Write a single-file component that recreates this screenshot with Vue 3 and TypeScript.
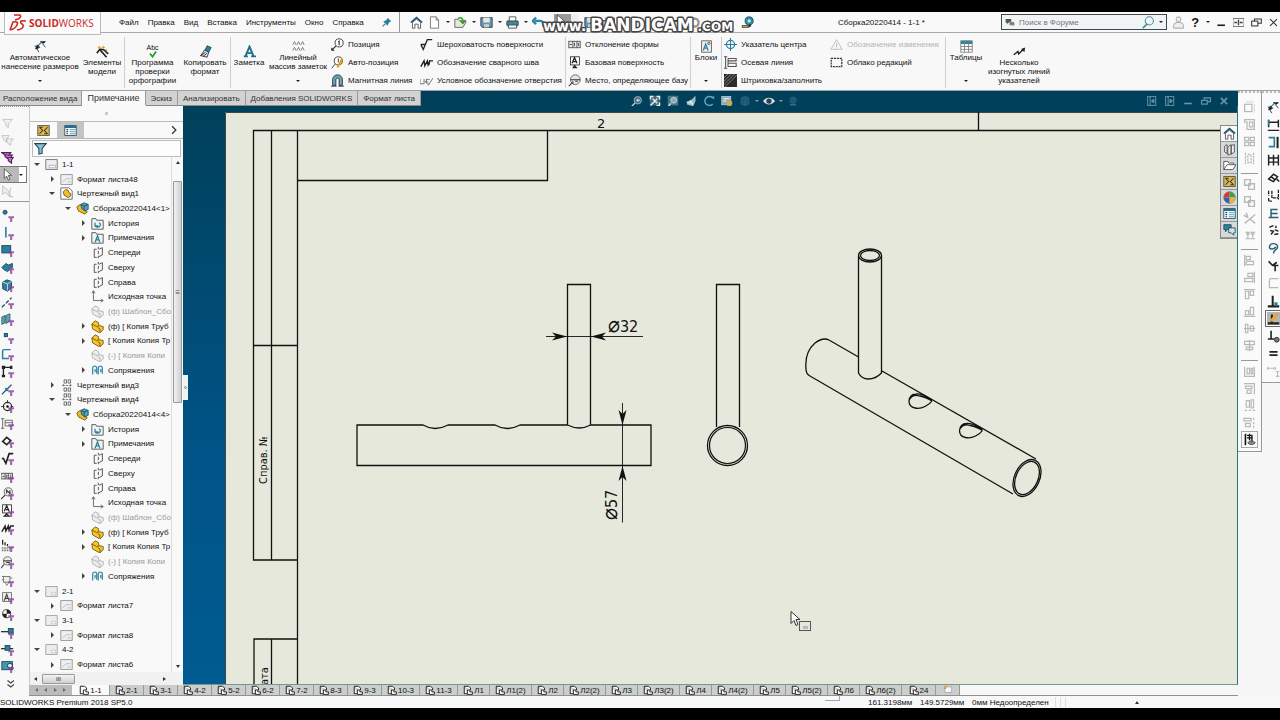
<script setup lang="ts">
import { ref } from 'vue'

interface TreeRow {
  level: number
  icon: string
  text: string
  arrow?: 'open' | 'closed'
  muted?: boolean
}
interface SheetTab {
  text: string
  size: 's' | 'm' | 'l' | 'xl'
}

const K = '#222'
const B = '#2a7f9e'
const P = '#8a3fa0'
const G = '#b9b9b9'
const filterMark = `<path d="M9 9h7v2.500h-2.200V16h-2.600v-4.500H9z" fill="${P}" opacity=".8"/>`
const gold = '<path d="M1 5l4-4 4 2 1 4 5 1v4l-4 4-9-5z" fill="#f6c62c" stroke="#6b4d08"/><path d="M8 9l3 2v4M1 5l6 3 3-1" fill="none" stroke="#6b4d08"/>'
const greyPart = '<path d="M1 5l4-4 4 2 1 4 5 1v4l-4 4-9-5z" fill="#ececec" stroke="#aaa"/><path d="M8 9l3 2v4M1 5l6 3 3-1" fill="none" stroke="#aaa"/>'

const icons: Record<string, string> = {
  smartDim: `<path d="M3 9L9 3M1 7l4 4" stroke="${B}" stroke-width="1.5"/><path d="M2 11l2-5 3 3zM8 2l6 0-2 2zM10 4l4 5" fill="${K}" stroke="${K}"/><path d="M3 10l3 5" stroke="${K}"/>`,
  modelItems: `<path d="M1 10l4-5 5 1 5 5" fill="none" stroke="${K}" stroke-width="2"/><path d="M5 6l8 9" stroke="${K}" stroke-width="2"/><circle cx="4" cy="3" r="1.6" fill="#f0a020"/><path d="M9 1v4M7 3h4M13 5v3" stroke="#d89018"/>`,
  spell: '<path d="M1 6l6 7L15 1" fill="none" stroke="#2f9e2f" stroke-width="4"/>',
  painter: `<path d="M10 1l5 2-3 6-5-2z" fill="${B}" stroke="#15465a"/><path d="M7 6l5 3-2 6-8-2z" fill="#d9e3e6" stroke="${K}"/><path d="M2 13l6-4M5 14l5-4" stroke="${K}"/>`,
  noteA: '<path d="M1 14h5M10 14h6M3 14L8 2l5 12M5 10h6" fill="none" stroke="#20708c" stroke-width="2.4"/>',
  pattern: '<path d="M1 6l2-4 2 4M6 6l2-4 2 4M11 6l2-4 2 4M1 13l2-4 2 4M6 13l2-4 2 4M11 13l2-4 2 4" fill="none" stroke="#666"/>',
  balloon: `<circle cx="10" cy="6" r="5" fill="#fff" stroke="${K}"/><path d="M9 5l1-1v5M6 10l-5 5M1 12v3h3" fill="none" stroke="${K}" stroke-width="1.3"/>`,
  autoBalloon: `<circle cx="9" cy="6" r="5" fill="#fff" stroke="${K}"/><path d="M9 3v5M5 10l-4 5" stroke="${K}"/><path d="M14 3l-6 11" stroke="#e79a1c" stroke-width="2.5"/>`,
  magnet: `<path d="M2 14V7a6 6 0 0112 0v7h-4V7a2 2 0 00-4 0v7z" fill="#62a9bf" stroke="${K}"/><path d="M0 15h7M9 15h7" stroke="${K}"/>`,
  rough: `<path d="M1 8h6M1 8l3 6 5-12h6" fill="none" stroke="${K}" stroke-width="1.6"/>`,
  weld: `<path d="M1 13L5 6l1 6 3-6 1 5 2-5h4M12 5l-1 6" fill="none" stroke="${K}" stroke-width="1.7"/>`,
  hole: '<path d="M0 6v6h5V6M8 6v5M6 9l2 2 2-2M12 7a3 3 0 100 5M10 14l6-9" fill="none" stroke="#777" stroke-width="1.2"/>',
  geomTol: '<rect x="1" y="4" width="14" height="8" fill="#e8e8e8" stroke="#444"/><path d="M6 4v8M11 4v8M2 8h3M8 6v4M13 6v4" stroke="#444"/>',
  datum: `<rect x="3" y="1" width="11" height="10" fill="#fff" stroke="${K}"/><path d="M5 9l3-7 3 7M6 7h5M8 11v2" fill="none" stroke="${K}" stroke-width="1.6"/><path d="M5 15l3-4 4 4z" fill="${K}"/>`,
  datumTarget: '<circle cx="9" cy="7" r="6" fill="#e6e6e6" stroke="#555"/><path d="M3 7h12M6 9v3M9 9h3M5 11l-4 4" fill="none" stroke="#333" stroke-width="1.3"/>',
  block: `<rect x="2" y="1" width="12" height="14" fill="#eee" stroke="#555"/><path d="M4 13l3-8 3 8M5 10h4" fill="none" stroke="${B}" stroke-width="1.5"/><circle cx="11" cy="4" r="1.5" fill="none" stroke="#444"/>`,
  centerMark: `<circle cx="8" cy="8" r="5" fill="none" stroke="${B}" stroke-width="1.5"/><path d="M8 0v16M0 8h16" stroke="${B}" stroke-width="1.3"/>`,
  centerLine: '<path d="M2 1v14M5 3v10h10V9H5V6h10V3H5M0 1h4M0 15h4" fill="none" stroke="#555" stroke-width="1.3"/>',
  hatch: '<rect width="16" height="16" fill="#2b2b2b"/><path d="M0 5l5-5M0 9l9-9M0 13l13-13M1 16L16 1" stroke="#aaa" stroke-width=".8"/>',
  revSymbol: `<path d="M8 2l7 12H1z" fill="#f3f3f3" stroke="${G}"/><path d="M8 6v5M8 12v1" stroke="${G}"/>`,
  revCloud: '<rect x="1.500" y="3" width="13" height="10" fill="none" stroke="#333" stroke-width="1.500" stroke-dasharray="2.500 1"/>',
  table: '<rect x="1" y="1" width="14" height="14" fill="#fff" stroke="#777"/><rect x="1" y="1" width="14" height="4" fill="#31859f"/><path d="M1 8h14M1 11.500h14M5.500 1v14M10.500 1v14" stroke="#777"/>',
  multi: `<path d="M1 12l5-4 1 3 6-6" fill="none" stroke="${K}" stroke-width="1.8"/><path d="M15 3l-1 6-4-4z" fill="${K}"/>`,
  pin: `<path d="M9 1l6 6-3 1-2 3-1 3-7-7 3-1 3-2z" fill="${B}"/><path d="M5 11l-4 4" stroke="${B}" stroke-width="2"/>`,
  home: '<path d="M1 8l7-6 7 6" fill="none" stroke="#17556d" stroke-width="2"/><path d="M3 8v7h3v-5h4v5h3V8L8 4z" fill="#fff" stroke="#444"/>',
  newDoc: '<path d="M3 1h7l3 4v10H3z" fill="#fff" stroke="#666"/><path d="M10 1v4h3" fill="none" stroke="#666"/>',
  open: '<path d="M1 14V4h4l2 2h6l2 1-4 7z" fill="#e8e8d8" stroke="#555"/><path d="M5 3c4-2 6 0 6 4M8 6l3 3 3-4" fill="none" stroke="#2fa02f" stroke-width="2"/>',
  save: '<path d="M1 2h14v12H3l-2-2z" fill="#5f97b3" stroke="#333"/><rect x="4" y="2" width="8" height="6" fill="#dfe7ea"/><rect x="5" y="10" width="6" height="4" fill="#ccc"/>',
  print: '<path d="M4 6V1h8v5" fill="#fff" stroke="#444"/><rect x="1" y="6" width="14" height="6" rx="1" fill="#3b87a6" stroke="#333"/><path d="M3 11h10v4H3z" fill="#eee" stroke="#444"/>',
  undo: '<path d="M4 6h6a4 4 0 014 4v3M5 2L1 6l4 4" fill="none" stroke="#2b86a8" stroke-width="3"/>',
  arrowCursor: '<path d="M4 1v12l3-3 2 5 2-1-2-5h4z" fill="#fff" stroke="#444"/>',
  tape: '<circle cx="10" cy="6" r="5" fill="#2d89ae" stroke="#174c62"/><circle cx="10" cy="6" r="2" fill="#d6e6c8"/><path d="M1 13h8l3-2" fill="none" stroke="#333" stroke-width="3"/><path d="M2 13h7" stroke="#e8c030"/>',
  redo: '<path d="M12 6H7a4 4 0 00-4 5M10 2l4 4-4 4" fill="none" stroke="#222" stroke-width="2"/>',
  gear: '<circle cx="8" cy="8" r="5" fill="none" stroke="#999" stroke-width="3"/>',
  user: '<circle cx="8" cy="4" r="3" fill="#eee" stroke="#999"/><path d="M2 15v-3a4 4 0 014-4h4a4 4 0 014 4v3z" fill="#eee" stroke="#999"/>',
  bubbles: '<path d="M1 3h9v6H5l-2 3V9H1z" fill="#555"/><path d="M7 8h8v5h-1v2l-2-2H7z" fill="#777" stroke="#eee" stroke-width=".5"/>',
  magnifier: '<circle cx="9" cy="6" r="5" fill="#f2f8fa" stroke="#4d88a4" stroke-width="1.300"/><path d="M6 10l-5 5" stroke="#4d88a4" stroke-width="2"/>',
  minimize: `<path d="M2 12h11" stroke="${K}" stroke-width="2.400"/>`,
  split: `<rect x="0" y="2" width="16" height="12" fill="none" stroke="#444"/><path d="M8 4v8M2 8h4M10 8h4" stroke="#444" stroke-width="2"/>`,
  restore: '<rect x="1" y="6" width="9" height="7" fill="none" stroke="#333" stroke-width="1.500"/><path d="M5 6V3h10v6h-5" fill="none" stroke="#333" stroke-width="1.500"/>',
  close: '<path d="M3 3l10 10M13 3L3 13" stroke="#333" stroke-width="1.600"/>',
  zoomFit: '<circle cx="9" cy="7" r="5" fill="#4c7183" stroke="#a8c4d0"/><path d="M7 7h5M9 5v4M5 11l-4 4" stroke="#d4e2e8" stroke-width="1.500"/>',
  zoomArea: '<rect x="1" y="1" width="14" height="13" fill="#43697c"/><path d="M2 6V2h4M10 2h4v4M14 10v4h-4M2 14l5-5M5 5l6 6M11 5L5 11" stroke="#e3edf0" stroke-width="2" fill="none"/>',
  zoomSheet: '<rect x="1" y="1" width="14" height="13" fill="#5d8191" opacity=".8"/><circle cx="9" cy="7" r="4" fill="#8facb8" stroke="#c7d8df"/><path d="M5 11l-3 4" stroke="#c7d8df" stroke-width="2"/>',
  section: '<path d="M2 9l7-3 5-5v7l-3 7-8-2z" fill="#9fbac6"/><path d="M3 10l8 1M7 7l3 6" stroke="#e8f0f3" stroke-width="1.500"/>',
  rotate: '<path d="M13 4a6 6 0 100 8" fill="none" stroke="#5fa9c8" stroke-width="2"/><path d="M10 2h5v4z" fill="#5fa9c8"/>',
  display: '<rect x="1" y="2" width="12" height="11" fill="#8ba9b6" stroke="#c4d6dd"/><path d="M3 5h8M3 8h4" stroke="#fff" stroke-width="1.500"/><circle cx="11" cy="11" r="4" fill="#c9ac5a"/>',
  cubeDim: '<path d="M3 4l5-2 5 2v8l-5 2-5-2zM8 6v8" fill="#1c5873" stroke="#2f6d88"/>',
  eye: '<path d="M0 8c4-6 12-6 16 0-4 6-12 6-16 0z" fill="#d6e2e8"/><circle cx="8" cy="8" r="3.500" fill="#2a4350"/>',
  ball: '<circle cx="8" cy="7" r="5" fill="#1f5873"/><path d="M4 13h8" stroke="#2f6d88" stroke-width="2"/>',
  paneL: '<rect x="1" y="1" width="13" height="14" fill="none" stroke="#6b97aa" stroke-width="1.500"/><path d="M5 1v14M11 5l-4 3 4 3z" stroke="#6b97aa" stroke-width="1.500" fill="#6b97aa"/>',
  paneR: '<rect x="1" y="1" width="13" height="14" fill="none" stroke="#6b97aa" stroke-width="1.500"/><path d="M5 1v14M8 5l4 3-4 3z" stroke="#6b97aa" stroke-width="1.500" fill="#6b97aa"/>',
  minDim: '<path d="M2 12h12" stroke="#6b97aa" stroke-width="2.500"/>',
  restDim: '<rect x="1" y="7" width="9" height="6" fill="none" stroke="#6b97aa" stroke-width="1.800"/><path d="M5 6V3h10v6h-5" fill="none" stroke="#6b97aa" stroke-width="1.800"/>',
  closeDim: '<path d="M3 3l10 10M13 3L3 13" stroke="#6b97aa" stroke-width="2.500"/>',
  // tree
  funnel: '<path d="M1 2h14l-5 6v6l-4 1V8z" fill="#8fc0cf" stroke="#1d4858" stroke-width="1.300"/>',
  sheetTab: '<rect x="1" y="2" width="14" height="12" fill="#e0b64a" stroke="#444"/><path d="M3 4l4 4-4 4M13 4L9 8l4 4M3 4h4M9 12h4" fill="none" stroke="#333" stroke-width="1.300"/>',
  listTab: '<rect x="1" y="2" width="14" height="12" fill="#fff" stroke="#17455a"/><rect x="1" y="2" width="14" height="3" fill="#2a6f8c"/><path d="M3 7h2M3 9.500h2M3 12h2" stroke="#17455a" stroke-width="1.500"/><path d="M7 7h7M7 9.500h7M7 12h7" stroke="#3a8aa8" stroke-width="1"/>',
  sheet: '<rect x="1" y="2" width="14" height="12" fill="#ededed" stroke="#9a9a9a"/><path d="M8 12h5V9H8z" fill="#fff" stroke="#c2c2c2"/>',
  sheetActive: '<rect x="1" y="2" width="14" height="12" fill="#eee" stroke="#666"/><path d="M5 12h8V9H5z" fill="#fff" stroke="#aaa"/>',
  format: '<rect x="1" y="2" width="14" height="12" fill="#efefef" stroke="#8a8a8a"/><path d="M3 11l5-4h5M9 11h4" fill="none" stroke="#b5b5b5"/>',
  view: '<path d="M1 1h10l4 4v10H1z" fill="#fff" stroke="#555"/><path d="M4 6l3-3 3 1 1 3 2 1v3l-3 2-5-3z" fill="#f0bd2c" stroke="#6b4d08"/>',
  viewPlain: '<path d="M5 1h3v4H5zM10 1h3v4h-3zM5 11h3v4H5zM10 11h3v4h-3z" fill="none" stroke="#555"/><path d="M3 8h11M4 6v4M13 6v4" stroke="#666" stroke-dasharray="3 1"/>',
  assembly: '<path d="M1 6l4-3 4 2 1 5 4 2-3 3-8-4z" fill="#f1bc25" stroke="#6b4d08"/><path d="M6 3l4-2 5 2v6l-4 2-4-3z" fill="#4fa1bf" stroke="#184a5e"/><path d="M10 5v5M6 3l4 2 5-2" fill="none" stroke="#184a5e"/>',
  history: '<path d="M1 2h5l1 2h8v11H1z" fill="#eef3f4" stroke="#444"/><path d="M5 11a3.500 3 0 105-4M5 7v4h4" fill="none" stroke="#2f7c98" stroke-width="1.500"/>',
  notes: '<path d="M1 2h5l1 2h8v11H1z" fill="#eef3f4" stroke="#444"/><path d="M5 14l3-8 3 8M6 11h4" fill="none" stroke="#2f7c98" stroke-width="1.600"/>',
  plane: '<path d="M4 4h3M4 4v10h3M9 1v3M9 6v4M9 12v3M10 4l4-2v9l-4 2" fill="none" stroke="#555" stroke-width="1.200"/>',
  origin: '<path d="M3 1v12h12M1 4l2-3 2 3M12 11l3 2-3 2" fill="none" stroke="#555"/>',
  part: gold,
  partDim: greyPart,
  mates: '<path d="M2 13V5a2.500 2.500 0 015 0v7M5 10V6M9 13V5a2.500 2.500 0 015 0v7M12 10V6" fill="none" stroke="#3e8da8" stroke-width="1.600"/>',
  // selection filters
  f0: '<path d="M2 3h12l-5 5v5l-3-2V8z" fill="#f2f2f2" stroke="#bbb"/>',
  f1: '<path d="M1 2h9l-3 4v4L4 8zM6 6h9l-3 4v4l-3-2z" fill="#f2f2f2" stroke="#bbb"/>',
  f2: '<path d="M1 2h11l-2 3h4l-2 3h3l-2 3v4l-4-3v-2L5 7V5z" fill="#c377d2" stroke="#54205f" stroke-width="1.400"/><path d="M4 5h6M7 8h5" stroke="#54205f"/>',
  f4: '<path d="M2 1v11l3-3 7 6-3-8z" fill="#eee" stroke="#bbb"/><path d="M12 3l-2 10 5 2" stroke="#bbb" fill="none"/>',
  g0: `<circle cx="5" cy="4" r="2.500" fill="${B}" stroke="#163f4f"/>${filterMark}`,
  g1: `<path d="M6 0v13" stroke="${B}" stroke-width="2"/>${filterMark}`,
  g2: `<rect x="1" y="2" width="11" height="9" fill="${B}" stroke="#163f4f"/>${filterMark}`,
  g3: `<path d="M1 8l5-5 3 2 5-2v5l-6 5-4-2z" fill="${B}" stroke="#163f4f"/>${filterMark}`,
  g4: `<path d="M2 4l5-3 6 2v8l-5 4-6-3z" fill="${B}" stroke="#163f4f"/><path d="M2 4l6 2 5-3M8 6v8" fill="none" stroke="#d4edf4"/>${filterMark}`,
  g5: `<path d="M1 14L13 2" stroke="#174c62" stroke-width="1.600" stroke-dasharray="5 2"/>${filterMark}`,
  g6: `<path d="M1 5l4-2v9l-4 2zM6 3l5-2v9l-5 3z" fill="#5fa6b8" stroke="#2b5866"/>${filterMark}`,
  g7: `<rect x="4" y="3" width="4" height="4" fill="${B}" stroke="#163f4f"/>${filterMark}`,
  g8: `<path d="M12 2H4Q2 2 2 4v9h8" fill="none" stroke="${B}" stroke-width="1.800"/>${filterMark}`,
  g9: `<path d="M3 13V3h10" fill="none" stroke="${K}" stroke-width="1.600"/><path d="M1 1h4v4H1zM11 1h3v4h-3zM1 12h4v3H1z" fill="${K}"/>${filterMark}`,
  g10: `<path d="M1 14L13 2" stroke="#174c62" stroke-width="1.600"/><rect x="5" y="6" width="4" height="4" fill="${B}"/>${filterMark}`,
  g11: `<circle cx="8" cy="8" r="5" fill="none" stroke="${K}" stroke-width="1.500"/><circle cx="8" cy="8" r="1.500"/><path d="M8 0v4M0 8h4M12 8h3" stroke="${K}"/>${filterMark}`,
  g12: `<path d="M2 2v12M5 4h9v7H5zM0 2h4M0 14h4M5 7h9" fill="none" stroke="#555"/>${filterMark}`,
  g13: `<path d="M2 8l5-5 5 4-5 5z" fill="none" stroke="${K}" stroke-width="2"/>${filterMark}`,
  g14: `<path d="M1 8h2l3 6 4-12h5" fill="none" stroke="${K}" stroke-width="2"/>${filterMark}`,
  g15: `<rect x="0" y="4" width="14" height="7" fill="#ddd" stroke="#444"/><path d="M5 4v7M9 4v7M2 8h2M7 6v4M12 6v4" stroke="#444"/>${filterMark}`,
  g16: `<circle cx="9" cy="6" r="5" fill="#eee" stroke="#555"/><path d="M7 8V4l4 4V4M5 10l-5 5" fill="none" stroke="${K}" stroke-width="1.300"/>${filterMark}`,
  g17: `<rect x="2" y="1" width="11" height="10" fill="#fff" stroke="${K}"/><path d="M4 9l3-7 3 7M6 7h4M7 11v2M4 15l3-3 3 3z" fill="none" stroke="${K}" stroke-width="1.500"/>${filterMark}`,
  g18: `<path d="M1 12L5 5l1 6 3-6 1 5 2-5h4" fill="none" stroke="${K}" stroke-width="1.800"/>${filterMark}`,
  g19: `<path d="M2 1v6M5 4v4M8 6v3" stroke="${K}" stroke-width="1.500"/><path d="M1 11h13M1 14h10" stroke="#777" stroke-dasharray="2 1" stroke-width="2"/>${filterMark}`,
  g20: `<circle cx="8" cy="6" r="5" fill="#eee" stroke="#555"/><path d="M3 6h10M6 8h5M4 10l-4 5" fill="none" stroke="#444" stroke-width="1.300"/>${filterMark}`,
  g21: `<rect x="3" y="3" width="8" height="7" fill="#eee" stroke="#666"/><path d="M5 10l2 4 3-4M1 3h2M1 7h2M11 5h3" fill="none" stroke="#666"/>${filterMark}`,
  g22: `<rect x="2" y="2" width="11" height="11" fill="#eee" stroke="#666"/><path d="M4 12l3-8 3 8M5 9h4" fill="none" stroke="#444" stroke-width="1.400"/>${filterMark}`,
  g23: `<circle cx="7" cy="7" r="5" fill="#fff" stroke="${K}"/><path d="M7 7V2a5 5 0 015 5zM7 7v5a5 5 0 01-5-5z" fill="${K}"/>${filterMark}`,
  g24: `<path d="M0 7h9" stroke="${K}" stroke-width="1.500"/><rect x="9" y="3" width="6" height="6" fill="${B}" stroke="#163f4f"/>${filterMark}`,
  g25: `<path d="M0 7h15" stroke="${K}" stroke-width="1.500"/><rect x="5" y="3" width="6" height="6" fill="${B}" stroke="#163f4f"/>${filterMark}`,
  g26: `<rect x="1" y="2" width="13" height="10" fill="#3a9bb5" stroke="#163f4f"/><circle cx="11" cy="7" r="3" fill="#dbe8ec" stroke="${K}"/>${filterMark}`,
  g27: '<path d="M8 3l4 3 4-3M8 8l4 3 4-3" fill="none" stroke="#444" stroke-width="1.500"/>',
  // task pane
  books: '<path d="M2 4l3-2v11l-3-2zM6 5l4-3v11l-4 2zM10 3l4-1v9l-4 3z" fill="#eee" stroke="#444"/>',
  folder: '<path d="M1 13V3h5l1 2h6v2M1 13l4-6h11l-4 6z" fill="#fff" stroke="#444"/>',
  pie: '<circle cx="8" cy="8" r="7" fill="#e9e9e9" stroke="#666"/><path d="M8 8V1a7 7 0 017 7z" fill="#36a14b"/><path d="M8 8v7a7 7 0 007-7z" fill="#f0b02c"/><path d="M8 8H1a7 7 0 017-7z" fill="#d23a2e"/><path d="M8 8v7a7 7 0 01-7-7z" fill="#2f62b5"/>',
  chat: '<path d="M1 2h9v6H5l-2 3V8H1z" fill="#337e9a" stroke="#184a5e"/><path d="M7 6h8v6h-2v3l-3-3H7z" fill="#cfe3ea" stroke="#184a5e"/>',
  // align toolbar
  a0: `<rect x="2" y="4" width="9" height="9" fill="none" stroke="${G}" stroke-width="1.500"/><path d="M4 1h8M14 4v10" stroke="${G}" stroke-dasharray="2 1"/>`,
  a1: `<path d="M2 2h12v12H5V5H2zM8 5h4v6H8z" fill="none" stroke="${G}" stroke-width="1.500"/>`,
  a2: `<path d="M2 3h5v4H2zM9 3h5v4H9zM2 9h5v4H2zM9 9h5v4H9z" fill="none" stroke="${G}" stroke-width="1.500"/>`,
  a3: `<path d="M3 1v14M6 3h4v10H6zM13 1v14" fill="none" stroke="${G}" stroke-width="1.500" stroke-dasharray="3 1"/>`,
  a4: `<path d="M2 2h7v7H2zM7 7h7v7H7z" fill="none" stroke="${G}" stroke-width="1.800"/>`,
  a6: `<path d="M1 4l5 3M15 3L2 14M9 9l6 5M4 1l2 6" stroke="${G}" stroke-width="1.800"/>`,
  a7: `<path d="M3 4h12M3 12h12M6 4v8M12 4v8M4 7l2-3 2 3M10 7l2-3 2 3" fill="none" stroke="${G}" stroke-width="1.500"/>`,
  b0: `<path d="M2 1v14M4 3h5v4H4zM4 9h9v4H4z" fill="none" stroke="${G}" stroke-width="1.500"/>`,
  b1: `<path d="M14 1v14M6 3h6v4H6zM2 9h10v4H2z" fill="none" stroke="${G}" stroke-width="1.500"/>`,
  b2: `<path d="M1 2h14M3 4h4v9H3zM9 4h4v5H9z" fill="none" stroke="${G}" stroke-width="1.500"/>`,
  b3: `<path d="M1 14h14M3 7h4v5H3zM9 3h4v9H9z" fill="none" stroke="${G}" stroke-width="1.500"/>`,
  b4: `<path d="M1 8h14M3 3h3v10H3zM9 5h4v6H9z" fill="none" stroke="${G}" stroke-width="1.500"/>`,
  b5: `<path d="M8 1v14M2 3h12v4H2zM4 10h8v3H4z" fill="none" stroke="${G}" stroke-width="1.500"/>`,
  c0: `<path d="M2 2v12h12V2M5 4h3v7H5zM10 4h2v7h-2z" fill="none" stroke="${G}" stroke-width="1.500"/>`,
  c1: `<path d="M1 2h13v13M3 5h8v3H3zM5 10h5v4H5z" fill="none" stroke="${G}" stroke-width="1.500"/>`,
  c2: `<path d="M4 2h4v8H4zM10 1h3v10h-3zM2 14h3M7 14h3M12 14h3" fill="none" stroke="${G}" stroke-width="1.500"/>`,
  c3: `<path d="M1 3h9v3H1zM3 9h6v4H3zM13 2v3M13 7v3M13 12v3" fill="none" stroke="${G}" stroke-width="1.500"/>`,
  vis: '<path d="M3 1v14" stroke="#111" stroke-width="2"/><path d="M5 3h6M8 1v8M11 2v8M5 6h7" stroke="#111" stroke-width="1.600"/><path d="M6 12c2-3 7-3 9 0-2 3-7 3-9 0z" fill="#888" stroke="#333"/>',
  // dimension toolbar
  d1: `<path d="M2 1v9M14 1v9M2 4h12M1 14h14" fill="none" stroke="${K}" stroke-width="1.800"/><path d="M2 8V1" stroke="${B}" stroke-width="2"/>`,
  d2: `<path d="M2 2h7v11H2" fill="none" stroke="${B}" stroke-width="2"/><path d="M13 1v14" stroke="${K}" stroke-width="2.500"/>`,
  d3: `<path d="M2 1v13M14 1v13M8 1v13M2 5h12M2 10h12" stroke="${K}" stroke-width="1.800"/>`,
  d4: `<path d="M2 10l6-6 5 3-5 6zM5 7l5 4M12 10l3 3" fill="none" stroke="${K}" stroke-width="1.800"/>`,
  d5: `<path d="M2 2v6M2 11v4h4M6 2v9h8M14 1v12" fill="none" stroke="${K}" stroke-width="1.600" stroke-dasharray="4 1"/>`,
  d6: `<path d="M4 3h9M4 8h9M2 13h12M5 3v10" fill="none" stroke="#285f75" stroke-width="1.800"/>`,
  d7: `<path d="M3 4l5-2M4 8l4 1-3 4M10 7l4 2M9 13l5-1M11 2v3" fill="none" stroke="${K}" stroke-width="1.800"/>`,
  d8: `<path d="M3 6a5 4 0 0110 0c0 4-5 3-5 8M3 6c0 4 6 3 8 0" fill="none" stroke="#285f75" stroke-width="1.800"/>`,
  d9: `<path d="M2 3l5 5h7M7 8l5-4M10 8v7" fill="none" stroke="${K}" stroke-width="2"/>`,
  d10: `<path d="M14 2H5Q3 2 3 4v9h11" fill="none" stroke="${G}" stroke-width="1.600"/>`,
  d11: `<path d="M7 1v13M1 14h14" stroke="${K}" stroke-width="2.500"/><rect x="9" y="9" width="4" height="4" fill="${B}"/>`,
  d12: `<path d="M6 3v11M1 14h14" stroke="${K}" stroke-width="2.500"/><path d="M13 2L5 11" stroke="#f0a52a" stroke-width="3.500"/>`,
  d13: `<path d="M5 1v10M1 11h8" stroke="${K}" stroke-width="2"/><circle cx="12" cy="12" r="3" fill="#777" stroke="${K}"/>`,
  d14: `<path d="M3 6h10M3 10h10" stroke="${K}" stroke-width="2"/>`,
  d15: `<path d="M1 4h9M1 2v4M10 2v4M13 8v6M11 8h4M11 14h4" stroke="${G}" stroke-width="1.500"/>`,
  tabDoc: `<path d="M2 2h7l3 3v3M2 2v12h5" fill="#fff" stroke="${K}" stroke-width="1.600"/><path d="M7 8h4v3h4v4H7z" fill="#fff" stroke="${K}" stroke-width="1.500"/>`,
  tabNew: '<rect x="3" y="3" width="11" height="9" fill="#f3f6fa" stroke="#8a97a8"/><path d="M2 1l2 3-3 1 4 1M5 0v5" stroke="#e8a520" stroke-width="1.500"/>',
}

const menus = ['Файл', 'Правка', 'Вид', 'Вставка', 'Инструменты', 'Окно', 'Справка']
const quick = ['newDoc', 'open', 'save', 'print']
const commandTabs = ['Расположение вида', 'Примечание', 'Эскиз', 'Анализировать', 'Добавления SOLIDWORKS', 'Формат листа']
const activeCommand = ref(1)
const search = ref('')

const colA = [['balloon', 'Позиция'], ['autoBalloon', 'Авто-позиция'], ['magnet', 'Магнитная линия']]
const colB = [['rough', 'Шероховатость поверхности'], ['weld', 'Обозначение сварного шва'], ['hole', 'Условное обозначение отверстия']]
const colC = [['geomTol', 'Отклонение формы'], ['datum', 'Базовая поверхность'], ['datumTarget', 'Место, определяющее базу']]
const colD = [['centerMark', 'Указатель центра'], ['centerLine', 'Осевая линия'], ['hatch', 'Штриховка/заполнить']]

const viewTools = ['zoomFit', 'zoomArea', 'zoomSheet', 'section', 'rotate', 'display', 'cubeDim', '', 'eye', '', 'ball']
const docTools = ['paneL', 'paneR', 'minDim', 'restDim', 'closeDim']
const topFilters = ['f0', 'f1', 'f2', 'arrowCursor', 'f4']
const filters = Array.from({ length: 28 }, (_, i) => 'g' + i)
const paneTabs = ['home', 'books', 'folder', 'sheetTab', 'pie', 'listTab', 'chat']
const alignGroups = [['a0', 'a1', 'a2', 'a3'], ['a4', 'a4', 'a6', 'a7'], ['b0', 'b1', 'b2', 'b3', 'b4', 'b5'], ['c0', 'c1', 'c2', 'c3', 'vis']]
const dimTools = ['smartDim', 'd1', 'd2', 'd3', 'd4', 'd5', 'd6', 'd7', 'd8', 'd9', 'd10', 'd11', 'd12', 'd13', 'd14', 'd15']

const assemblyRows = (n: number): TreeRow[] => [
  { level: 2, icon: 'assembly', text: `Сборка20220414<${n}>`, arrow: 'open' },
  { level: 3, icon: 'history', text: 'История', arrow: 'closed' },
  { level: 3, icon: 'notes', text: 'Примечания', arrow: 'closed' },
  { level: 3, icon: 'plane', text: 'Спереди' },
  { level: 3, icon: 'plane', text: 'Сверху' },
  { level: 3, icon: 'plane', text: 'Справа' },
  { level: 3, icon: 'origin', text: 'Исходная точка' },
  { level: 3, icon: 'partDim', text: '(ф) Шаблон_Сбо', muted: true },
  { level: 3, icon: 'part', text: '(ф) [ Копия Труб', arrow: 'closed' },
  { level: 3, icon: 'part', text: '[ Копия Копия Тр', arrow: 'closed' },
  { level: 3, icon: 'partDim', text: '(-) [ Копия Копи', muted: true },
  { level: 3, icon: 'mates', text: 'Сопряжения', arrow: 'closed' },
]
const sheetRows = (name: string, format: string): TreeRow[] => [
  { level: 0, icon: 'sheet', text: name, arrow: 'open' },
  { level: 1, icon: 'format', text: format, arrow: 'closed' },
]
const tree: TreeRow[] = [
  { level: 0, icon: 'sheetActive', text: '1-1', arrow: 'open' },
  { level: 1, icon: 'format', text: 'Формат листа48', arrow: 'closed' },
  { level: 1, icon: 'view', text: 'Чертежный вид1', arrow: 'open' },
  ...assemblyRows(1),
  { level: 1, icon: 'viewPlain', text: 'Чертежный вид3', arrow: 'closed' },
  { level: 1, icon: 'viewPlain', text: 'Чертежный вид4', arrow: 'open' },
  ...assemblyRows(4),
  ...sheetRows('2-1', 'Формат листа7'),
  ...sheetRows('3-1', 'Формат листа8'),
  ...sheetRows('4-2', 'Формат листа6'),
]

const tab = (size: SheetTab['size']) => (text: string): SheetTab => ({ text, size })
const sheets: SheetTab[] = [
  tab('l')('1-1'),
  ...['2-1', '3-1', '4-2', '5-2', '6-2', '7-2', '8-3', '9-3'].map(tab('m')),
  ...['10-3', '11-3'].map(tab('l')),
  ...['1', '2', '3', '4', '5', '6'].flatMap((n) => [tab('s')(`Л${n}`), tab('xl')(`Л${n}(2)`)]),
  tab('m')('24'),
]
const activeSheet = ref(0)
</script>

<template>
  <div class="app">
    <header class="menubar">
      <div class="logo">
        <svg class="logo-mark" viewBox="0 0 18 18"><path d="M6 1h6q2 2-2 4l-3 1M2 16l3-8q6-1 4 3t-7 5M18 7q-7-1-5 2l2 2q1 4-6 5" fill="none" stroke="#c8291f" stroke-width="1.600" /></svg>
        <span class="logo-text"><b>SOLID</b>WORKS</span>
      </div>
      <nav class="menus">
        <button v-for="m in menus" :key="m">{{ m }}</button>
        <svg class="ic" viewBox="0 0 16 16" v-html="icons.pin" />
      </nav>
      <div class="quick">
        <button aria-label="Домой"><svg class="ic lg" viewBox="0 0 16 16" v-html="icons.home" /></button>
        <template v-for="q in quick" :key="q">
          <button :aria-label="q"><svg class="ic lg" viewBox="0 0 16 16" v-html="icons[q]" /></button>
          <i class="caret" />
        </template>
        <button aria-label="Отменить"><svg class="ic lg" viewBox="0 0 16 16" v-html="icons.undo" /></button>
        <div class="select-tool"><svg class="ic lg" viewBox="0 0 16 16" v-html="icons.arrowCursor" /></div>
        <svg class="ic lg" viewBox="0 0 16 16" v-html="icons.save" />
        <svg class="ic lg" viewBox="0 0 16 16" v-html="icons.restore" />
        <svg class="ic lg far" viewBox="0 0 16 16" v-html="icons.redo" />
        <svg class="ic lg" viewBox="0 0 16 16" v-html="icons.gear" />
        <svg class="ic lg tape" viewBox="0 0 16 16" v-html="icons.tape" />
        <svg class="watermark" width="210" height="20">
          <text y="17"><tspan x="4" class="wm-s">www.</tspan><tspan dx="4" class="wm-l">BANDICAM</tspan><tspan dx="4" class="wm-xs">.COM</tspan></text>
        </svg>
      </div>
      <div class="title">Сборка20220414 - 1-1 *</div>
      <div class="search">
        <svg class="ic" viewBox="0 0 16 16" v-html="icons.bubbles" />
        <input v-model="search" type="text" placeholder="Поиск в Форуме" aria-label="Поиск в Форуме" />
        <svg class="ic lg" viewBox="0 0 16 16" v-html="icons.magnifier" />
        <i class="caret" />
      </div>
      <div class="window-tools">
        <svg class="ic lg" viewBox="0 0 16 16" v-html="icons.user" />
        <button class="help" aria-label="Справка">?</button>
        <i class="caret" />
        <button v-for="w in ['minimize', 'split', 'restore', 'close']" :key="w" :aria-label="w"><svg class="ic win" viewBox="0 0 16 16" v-html="icons[w]" /></button>
      </div>
    </header>

    <div class="ribbon">
      <button class="big w80"><svg class="ic lg" viewBox="0 0 16 16" v-html="icons.smartDim" /><span>Автоматическое нанесение размеров</span><i class="caret end" /></button>
      <button class="big low w44"><svg class="ic lg" viewBox="0 0 16 16" v-html="icons.modelItems" /><span>Элементы модели</span></button>
      <i class="sep" />
      <button class="big low w54"><span class="abc">Abc</span><svg class="ic tick" viewBox="0 0 16 16" v-html="icons.spell" /><span>Программа проверки орфографии</span></button>
      <button class="big low w50"><svg class="ic lg" viewBox="0 0 16 16" v-html="icons.painter" /><span>Копировать формат</span></button>
      <i class="sep" />
      <button class="big low w36"><svg class="ic lg" viewBox="0 0 16 16" v-html="icons.noteA" /><span>Заметка</span></button>
      <button class="big w62"><svg class="ic lg" viewBox="0 0 16 16" v-html="icons.pattern" /><span>Линейный массив заметок</span><i class="caret end" /></button>
      <div class="col c95"><button v-for="c in colA" :key="c[1]"><svg class="ic lg" viewBox="0 0 16 16" v-html="icons[c[0]]" />{{ c[1] }}</button></div>
      <div class="col c147"><button v-for="c in colB" :key="c[1]"><svg class="ic lg" viewBox="0 0 16 16" v-html="icons[c[0]]" />{{ c[1] }}</button></div>
      <i class="sep" />
      <div class="col c124"><button v-for="c in colC" :key="c[1]"><svg class="ic lg" viewBox="0 0 16 16" v-html="icons[c[0]]" />{{ c[1] }}</button></div>
      <i class="sep" />
      <button class="big w30"><svg class="ic lg" viewBox="0 0 16 16" v-html="icons.block" /><span>Блоки</span><i class="caret end" /></button>
      <i class="sep" />
      <div class="col c106"><button v-for="c in colD" :key="c[1]"><svg class="ic lg" viewBox="0 0 16 16" v-html="icons[c[0]]" />{{ c[1] }}</button></div>
      <div class="col c117">
        <button disabled><svg class="ic lg" viewBox="0 0 16 16" v-html="icons.revSymbol" />Обозначение изменения</button>
        <button><svg class="ic lg" viewBox="0 0 16 16" v-html="icons.revCloud" />Облако редакций</button>
      </div>
      <i class="sep" />
      <button class="big w40"><svg class="ic lg" viewBox="0 0 16 16" v-html="icons.table" /><span>Таблицы</span><i class="caret end" /></button>
      <button class="big low w66"><svg class="ic lg" viewBox="0 0 16 16" v-html="icons.multi" /><span>Несколько изогнутых линий указателей</span></button>
    </div>

    <div class="body">
      <main class="main">
        <div class="tabrow">
          <button v-for="(t, i) in commandTabs" :key="t" class="cmd" :class="{ on: i === activeCommand }" @click="activeCommand = i">{{ t }}</button>
          <div class="view-tools">
            <template v-for="(v, i) in viewTools" :key="i">
              <i v-if="!v" class="caret pale" />
              <svg v-else class="ic" viewBox="0 0 16 16" v-html="icons[v]" />
            </template>
          </div>
          <div class="doc-tools"><svg v-for="v in docTools" :key="v" class="ic" viewBox="0 0 16 16" v-html="icons[v]" /></div>
        </div>

        <div class="work">
          <aside class="filters">
            <div class="filters-top">
              <span v-for="(f, i) in topFilters" :key="f" class="ftool" :class="{ sel: i === 3 }"><svg class="ic lg" viewBox="0 0 16 16" v-html="icons[f]" /><i v-if="i === 3" class="caret" /></span>
            </div>
            <div class="filters-rest"><svg v-for="f in filters" :key="f" class="ic lg" viewBox="0 0 16 16" v-html="icons[f]" /></div>
          </aside>

          <div class="center">
            <div class="stage">
              <section class="panel">
                <div class="grip"><i /></div>
                <div class="panel-tabs">
                  <button class="ptab on" aria-label="Дерево"><svg class="ic lg" viewBox="0 0 16 16" v-html="icons.sheetTab" /></button>
                  <button class="ptab" aria-label="Свойства"><svg class="ic lg" viewBox="0 0 16 16" v-html="icons.listTab" /></button>
                  <svg class="ic chevron" viewBox="0 0 16 16"><path d="M5 2l6 6-6 6" fill="none" stroke="#333" stroke-width="2" /></svg>
                </div>
                <div class="filterbox"><svg class="ic lg" viewBox="0 0 16 16" v-html="icons.funnel" /><input type="text" aria-label="Фильтр" /></div>
                <div class="treewrap">
                  <ul class="tree">
                    <li v-for="(r, i) in tree" :key="i" :class="['lv' + r.level, { muted: r.muted }]">
                      <i class="twist" :class="r.arrow" />
                      <svg class="ic lg" viewBox="0 0 16 16" v-html="icons[r.icon]" />
                      <span>{{ r.text }}</span>
                    </li>
                  </ul>
                  <div class="vscroll"><i class="tri up" /><div class="vthumb">≡</div><i class="tri down" /></div>
                </div>
                <div class="hscroll"><i class="tri left" /><div class="hthumb">III</div><i class="tri right" /></div>
              </section>

              <div class="canvas">
                <svg class="drawing" width="100%" height="100%">
                  <rect x="42" y="6" width="100%" height="100%" fill="#e5e8db" />
                  <path d="M42.500 1200V6.500H2400" fill="none" stroke="#3b4a45" />
                  <g transform="translate(-183 -106)" fill="none" stroke="#111" stroke-width="1.300">
                    <path d="M2400 130.500H253.500V560H297M271.500 130V560M297.500 130V1200M297 180.500H547.500V130M978.500 112V130M253 345.500H297M297 639H254V1200M271.500 639V1200" />
                    <!-- front view -->
                    <path d="M357 425H423q12 7 25 0H495q12 7 25 0H567.500q12 6 23 0H651V465.500H357zM567.500 425V284.500H590.500V425" />
                    <!-- side view -->
                    <path d="M716.500 427V284.500H739.500V427" />
                    <circle cx="727.500" cy="445.500" r="20" /><circle cx="727.500" cy="445.500" r="18" stroke-width="1.200" />
                    <!-- isometric view -->
                    <path d="M858.500 256V373q3 6 10 6t13-6V256M858.500 357L829 340q-6-3-14 3c-7 6-10 15-9 26q0 5 4 7L1013 494M882 371L1036 459" />
                    <ellipse cx="870" cy="255.500" rx="11.500" ry="6.500" /><ellipse cx="870" cy="255.500" rx="9.500" ry="5" />
                    <ellipse cx="1027" cy="478" rx="12.500" ry="19.500" transform="rotate(25 1027 478)" />
                    <ellipse cx="1027" cy="478" rx="11" ry="17.500" transform="rotate(25 1027 478)" />
                    <path d="M932 401q-2 3-7 5.500t-10 1.500q-6-1-6-7 1-7 7-7 6-1 16 6M910 399q3-5 10-3 8 2 12 5" />
                    <path d="M982.500 430.500q-2 3-7 5.500t-10 1.500q-6-1-6-7 1-7 7-7 6-1 16 6M960.500 428.500q3-5 10-3 8 2 12 5" />
                    <!-- dimensions -->
                    <path d="M546 336.500H643M622.500 403V522.500" stroke-width=".9" />
                    <path d="M567 336.500l-15-4 4 4-4 4zM591 336.500l15-4-4 4 4 4zM622.500 425l-4-15 4 4 4-4zM622.500 466l-4 15 4-4 4 4z" fill="#111" stroke="none" />
                  </g>
                  <g transform="translate(-183 -106)" fill="#111">
                    <text x="597" y="128" class="zone">2</text>
                    <text x="608" y="332" class="dim"><tspan class="dia">⌀</tspan>32</text>
                    <text transform="translate(617 520) rotate(-90)" class="dim"><tspan class="dia">⌀</tspan>57</text>
                    <text transform="translate(267 484) rotate(-90)" class="stamp">Справ. №</text>
                    <text transform="translate(268 685) rotate(-90)" class="stamp">ата</text>
                    <path d="M791 611.500v12l3-3 2 5 2-1-2-5h4z" fill="#fff" stroke="#333" />
                    <rect x="799.500" y="621.500" width="11" height="9" fill="#e6e6e0" stroke="#555" />
                    <rect x="803" y="626" width="5" height="3" fill="#bbb" />
                  </g>
                </svg>
                <div class="splitter"><i /></div>
                <div class="task-tabs"><button v-for="p in paneTabs" :key="p" :aria-label="p"><svg class="ic lg" viewBox="0 0 16 16" v-html="icons[p]" /></button></div>
              </div>
            </div>

            <nav class="sheets">
              <div class="sheet-nav"><i class="tri left" /><i class="tri left" /><i class="tri right" /><i class="tri right" /></div>
              <button v-for="(s, i) in sheets" :key="s.text" class="sheet" :class="[s.size, { on: i === activeSheet }]" @click="activeSheet = i"><svg class="ic" viewBox="0 0 16 16" v-html="icons.tabDoc" />{{ s.text }}</button>
              <button class="sheet new" aria-label="Добавить лист"><svg class="ic" viewBox="0 0 16 16" v-html="icons.tabNew" /></button>
            </nav>
          </div>
        </div>
      </main>

      <aside class="rails">
        <div class="rail align">
          <div v-for="(g, gi) in alignGroups" :key="gi" class="rgroup"><svg v-for="(a, ai) in g" :key="ai" class="ic lg" :class="{ boxed: a === 'vis' }" viewBox="0 0 16 16" v-html="icons[a]" /></div>
        </div>
        <div class="rail dims"><svg v-for="d in dimTools" :key="d" class="ic lg" :class="{ pressed: d === 'd12' }" viewBox="0 0 16 16" v-html="icons[d]" /></div>
      </aside>
    </div>

    <footer class="status">
      <span class="product">SOLIDWORKS Premium 2018 SP5.0</span>
      <i class="hint" />
      <span class="coord">161.3198мм</span>
      <span class="coord">149.5729мм</span>
      <span class="depth">0мм Недоопределен</span>
      <i class="tick-sep" /><i class="tick-sep" /><i class="tick-sep" />
      <i class="tri up last" />
    </footer>
  </div>
</template>

<style>
body {
  margin: 0;
  background: #000;
}
</style>

<style scoped>
.app {
  box-sizing: border-box;
  min-height: 100vh;
  padding: 12px 0;
  display: flex;
  flex-direction: column;
  background: #000;
  font: 8px/9px "Liberation Sans", Arial, sans-serif;
  color: #111;
  overflow: hidden;
}
button {
  font: inherit;
  color: inherit;
  background: none;
  border: 0;
  padding: 0;
  margin: 0;
}
input {
  font: inherit;
  border: 0;
  padding: 0;
  min-width: 0;
  flex: 1;
  background: none;
  outline: 0;
}
.ic {
  width: 10px;
  height: 10px;
  flex: none;
  display: block;
}
.ic.lg {
  width: 13px;
  height: 13px;
}
.caret {
  flex: none;
  width: 0;
  height: 0;
  border: 2px solid transparent;
  border-top-color: #222;
  border-bottom: 0;
}
.caret.pale {
  border-top-color: #7fa5b5;
}

/* menu bar */
.menubar {
  display: flex;
  align-items: center;
  height: 21px;
  background: #f9f9f9;
  border-bottom: 1px solid #a9a9a9;
  box-sizing: border-box;
}
.logo {
  flex: none;
  display: flex;
  align-items: center;
  width: 97px;
  height: 23px;
  margin: 3px 0 0 4px;
  box-sizing: border-box;
  border: 1px solid #bbb;
  border-top: 0;
  background: #fbfbfb;
  z-index: 1;
  color: #c8291f;
  gap: 3px;
  padding-left: 3px;
}
.logo-mark {
  width: 18px;
  height: 18px;
  flex: none;
}
.logo-text {
  font-family: "Open Sans", "Noto Sans", sans-serif;
  font-size: 10px;
  line-height: 16px;
}
.menus {
  flex: none;
  width: 298px;
  display: flex;
  align-items: center;
  gap: 9px;
  padding-left: 18px;
  box-sizing: border-box;
}
.menus .ic {
  margin-left: 9px;
}
.quick {
  flex: none;
  display: flex;
  align-items: center;
  width: 425px;
  height: 20px;
  gap: 5px;
  padding-left: 10px;
  border-left: 1px solid #999;
  box-sizing: border-box;
  position: relative;
}
.quick .caret {
  margin-right: -1px;
}
.select-tool {
  width: 25px;
  height: 16px;
  background: linear-gradient(90deg, #999 70%, #eee 70%);
  margin-left: 4px;
}
.quick .far {
  margin-left: 50px;
}
.quick .tape {
  margin-left: auto;
  margin-right: 70px;
}
.watermark {
  position: absolute;
  left: 139px;
  top: 2px;
}
.watermark text {
  font-family: "DejaVu Sans", sans-serif;
  font-weight: bold;
  fill: #fff;
  stroke: #444;
  stroke-width: 3px;
  paint-order: stroke;
  stroke-linejoin: round;
}
.wm-s { font-size: 14px; }
.wm-l { font-size: 17px; }
.wm-xs { font-size: 12px; }
.title {
  flex: 1;
  padding-left: 14px;
  white-space: nowrap;
}
.search {
  flex: none;
  width: 166px;
  height: 16px;
  box-sizing: border-box;
  border: 1px solid #3c4a50;
  background: #f1f4f4;
  display: flex;
  align-items: center;
  gap: 4px;
  padding: 0 3px;
}
.window-tools {
  flex: none;
  width: 113px;
  display: flex;
  align-items: center;
  justify-content: space-between;
  padding: 0 1px 0 5px;
  box-sizing: border-box;
}
.ic.win {
  width: 11px;
  height: 11px;
}
.help {
  font-size: 13px;
  font-weight: bold;
}

/* ribbon */
.ribbon {
  height: 58px;
  box-sizing: border-box;
  display: flex;
  background: #f8f8f8;
  border-bottom: 1px solid #9aa3a6;
  padding: 4px 0 2px;
}
.ribbon .sep {
  width: 1px;
  background: #cfcfcf;
  flex: none;
}
.big {
  flex: none;
  display: flex;
  flex-direction: column;
  align-items: center;
  padding-top: 3px;
  white-space: normal;
  text-align: center;
}
.big.low {
  padding-top: 8px;
}
.big span {
  flex: none;
}
.big .caret.end {
  margin: auto 0 6px;
}
.big .abc {
  font-size: 7px;
  line-height: 6px;
}
.big .tick {
  height: 7px;
}
.w80 { width: 80px; }
.w44 { width: 44px; }
.w54 { width: 55px; }
.w50 { width: 50px; }
.w36 { width: 36px; }
.w62 { width: 62px; }
.w30 { width: 30px; }
.w40 { width: 40px; }
.w66 { width: 66px; }
.col {
  flex: none;
  display: flex;
  flex-direction: column;
  gap: 4px;
  box-sizing: border-box;
  padding-left: 2px;
}
.col button {
  display: flex;
  align-items: center;
  gap: 4px;
  height: 14px;
  white-space: nowrap;
}
.col button:disabled {
  color: #b3b3b3;
}
.c95 { width: 89px; }
.c147 { width: 147px; }
.c124 { width: 124px; }
.c106 { width: 106px; }
.c117 { width: 117px; }

/* body */
.body {
  flex: 1;
  display: flex;
  background: #f7f7f7;
}
.main {
  flex: 1;
  min-width: 0;
  display: flex;
  flex-direction: column;
}
.tabrow {
  height: 15px;
  display: flex;
  background: #00405a;
}
.cmd {
  box-sizing: border-box;
  padding: 0 5px;
  background: #d2d2d2;
  border-right: 1px solid #999;
  border-bottom: 1px solid #888;
  white-space: nowrap;
  color: #333;
}
.cmd:first-child {
  padding: 0 4px 0 3px;
}
.cmd.on {
  background: #fafafa;
  border-bottom-color: #fafafa;
  font-size: 9px;
}
.view-tools {
  flex: 1;
  display: flex;
  align-items: center;
  gap: 6px;
  padding: 4px 0 0 210px;
}
.view-tools .ic {
  width: 12px;
  height: 12px;
}
.view-tools .caret {
  margin: 0 -2px;
}
.doc-tools {
  display: flex;
  align-items: center;
  gap: 8px;
  padding: 4px 9px 0 0;
}
.work {
  flex: 1;
  display: flex;
}
.filters {
  width: 29px;
  flex: none;
  display: flex;
  flex-direction: column;
  background: #f8f8f8;
  border-top: 1px dotted #999;
  box-sizing: border-box;
}
.filters-top {
  padding: 8px 0 1px;
  border-bottom: 1px solid #999;
}
.ftool {
  display: flex;
  align-items: center;
  height: 17px;
  padding-left: 1px;
  box-sizing: border-box;
  gap: 5px;
}
.ftool.sel {
  border: 1px solid #777;
  border-left: 0;
  background: linear-gradient(90deg, #b9b9b9 19px, #fff 19px);
  width: 27px;
}
.filters-rest {
  flex: 1;
  display: grid;
  grid-auto-rows: minmax(0, 1fr);
  padding: 5px 0 3px 1px;
  align-items: center;
}
.center {
  flex: 1;
  min-width: 0;
  display: flex;
  flex-direction: column;
}
.stage {
  flex: 1;
  display: flex;
}
.panel {
  width: 154px;
  flex: none;
  display: flex;
  flex-direction: column;
  background: #f9f9f9;
  border-left: 1px solid #ccc;
  box-sizing: border-box;
}
.grip {
  height: 15px;
  border-bottom: 1px solid #bbb;
  display: grid;
  place-items: center;
}
.grip i {
  width: 3px;
  height: 3px;
  border: 1px solid #999;
  border-radius: 50%;
  box-sizing: border-box;
}
.panel-tabs {
  display: flex;
  height: 17px;
  border-bottom: 1px solid #b5b5b5;
  box-sizing: border-box;
  align-items: stretch;
}
.ptab {
  width: 27px;
  display: grid;
  place-items: center;
  background: #c4c4c4;
}
.ptab.on {
  background: #fbfbfb;
}
.chevron {
  margin: 3px 4px 0 auto;
}
.filterbox {
  display: flex;
  align-items: center;
  height: 17px;
  margin: 1px 2px 0 2px;
  padding-left: 1px;
  box-sizing: border-box;
  border: 1px solid #bcbcbc;
  background: #fdfdfd;
}
.treewrap {
  flex: 1;
  display: flex;
}
.tree {
  list-style: none;
  margin: 0;
  padding: 0;
  width: 141px;
  flex: none;
  display: grid;
  grid-auto-rows: minmax(0, 1fr);
}
.tree li {
  display: flex;
  align-items: center;
  gap: 4px;
  white-space: nowrap;
  min-width: 0;
}
.tree li.muted {
  color: #9a9a9a;
}
.lv0 { padding-left: 4px; }
.lv1 { padding-left: 19px; }
.lv2 { padding-left: 35px; }
.lv3 { padding-left: 50px; }
.twist {
  width: 6px;
  flex: none;
}
.twist::before {
  content: "";
  display: block;
  width: 0;
  border: 2px solid transparent;
}
.twist.open::before {
  border-width: 3px 3px 0;
  border-top-color: #444;
}
.twist.closed::before {
  border-width: 3px 0 3px 3px;
  border-left-color: #444;
  margin-left: 2px;
}
.tree .ic {
  margin-left: 1px;
}
.tri {
  width: 0;
  height: 0;
  flex: none;
  border: 3px solid transparent;
}
.tri.up { border-width: 0 2px 3px; border-bottom-color: #333; }
.tri.down { border-width: 3px 2px 0; border-top-color: #333; }
.tri.left { border-width: 2px 3px 2px 0; border-right-color: #333; }
.tri.right { border-width: 2px 0 2px 3px; border-left-color: #333; }
.vscroll {
  flex: 1;
  display: flex;
  flex-direction: column;
  align-items: center;
  justify-content: space-between;
  border-left: 1px solid #ddd;
  padding: 4px 0;
}
.vthumb {
  width: 9px;
  height: 222px;
  margin: 17px 0 auto;
  border: 1px solid #999;
  border-radius: 1px;
  background: linear-gradient(90deg, #f2f2f2, #cfcfd2);
  box-sizing: border-box;
  display: grid;
  place-items: center;
  color: #555;
}
.hscroll {
  height: 13px;
  display: flex;
  align-items: center;
  padding: 0 17px 0 4px;
  background: #f1f1f1;
}
.hthumb {
  width: 33px;
  height: 10px;
  margin: 0 auto 0 5px;
  box-sizing: border-box;
  border: 1px solid #999;
  border-radius: 1px;
  background: linear-gradient(#f4f4f4, #cfcfd2);
  text-align: center;
  font-size: 6px;
  line-height: 8px;
}
.canvas {
  flex: 1;
  min-width: 0;
  position: relative;
  background: linear-gradient(#00405a, #005487 60%, #005b91);
  border-right: 1px solid #2f7482;
  border-bottom: 1px solid #6f9a97;
}
.drawing {
  position: absolute;
  inset: 0;
  display: block;
}
.zone { font: 13px "DejaVu Sans", sans-serif; }
.dim { font: 16px "DejaVu Sans Condensed", "DejaVu Sans", sans-serif; }
.dia { font-size: 22px; font-weight: 200; }
.stamp { font: 11px "DejaVu Sans Condensed", "DejaVu Sans", sans-serif; }
.splitter {
  position: absolute;
  left: 0;
  top: 269px;
  width: 5px;
  height: 25px;
  background: #eef3f3;
  display: grid;
  place-items: center;
}
.splitter i {
  width: 3px;
  height: 3px;
  box-sizing: border-box;
  border: 1px solid #888;
  border-radius: 50%;
}
.task-tabs {
  position: absolute;
  right: 0;
  top: 19px;
  width: 17px;
  box-sizing: border-box;
  border: 1px solid #888;
  border-right: 0;
}
.task-tabs button {
  display: grid;
  place-items: center;
  width: 16px;
  height: 16px;
  background: #d8d8d8;
  border-bottom: 1px solid #999;
}
.task-tabs button:first-child {
  background: #f8f8f8;
}

/* sheet tabs */
.sheets {
  display: flex;
  height: 10px;
  border-bottom: 1px solid #8b9295;
  background: #f7f7f7;
}
.sheet-nav {
  width: 43px;
  flex: none;
  background: #a3a3a3;
  display: flex;
  align-items: center;
  justify-content: space-evenly;
  opacity: .7;
}
.sheet {
  flex: none;
  display: flex;
  align-items: center;
  justify-content: center;
  gap: 1px;
  box-sizing: border-box;
  background: #cbcecb;
  border-right: 1px solid #999;
  white-space: nowrap;
}
.sheet.on {
  background: #fafafa;
}
.sheet.s { width: 32px; }
.sheet.m { width: 34px; }
.sheet.l { width: 38px; }
.sheet.xl { width: 42px; }
.sheet.new { width: 24px; }

/* right toolbars */
.rails {
  flex: none;
  width: 42px;
  display: flex;
  align-items: flex-start;
}
.rail {
  box-sizing: border-box;
  border-top: 2px dotted #bbb;
  border-bottom: 1px solid #999;
  border-right: 1px solid #999;
  background: #fafafa;
  display: flex;
  flex-direction: column;
  align-items: center;
}
.align {
  width: 24px;
  height: 361px;
  padding: 8px 0 5px;
  justify-content: space-between;
}
.rgroup {
  display: flex;
  flex-direction: column;
  align-items: center;
  gap: 4px;
  width: 17px;
}
.rgroup + .rgroup {
  border-top: 1px solid #999;
  padding-top: 4px;
}
.boxed {
  outline: 1px solid #aaa;
  outline-offset: 1px;
}
.dims {
  width: 18px;
  height: 292px;
  border-right: 0;
  padding: 8px 0 4px 4px;
  justify-content: space-between;
}
.pressed {
  background: #b5b5b5;
  outline: 1px solid #666;
  outline-offset: 1px;
}

/* status bar */
.status {
  height: 12px;
  display: flex;
  align-items: center;
  background: #f8f8f8;
  white-space: nowrap;
}
.product {
  width: 825px;
}
.hint {
  width: 15px;
  height: 5px;
  align-self: flex-start;
  border: 1px solid #9aa8b0;
  border-width: 0 1px 1px 0;
  box-sizing: border-box;
  margin-right: 28px;
}
.coord {
  width: 52px;
}
.depth {
  width: 83px;
}
.tick-sep {
  width: 1px;
  height: 10px;
  margin-right: 4px;
  background: #ddd;
}
.last {
  margin-left: 65px;
}
</style>
